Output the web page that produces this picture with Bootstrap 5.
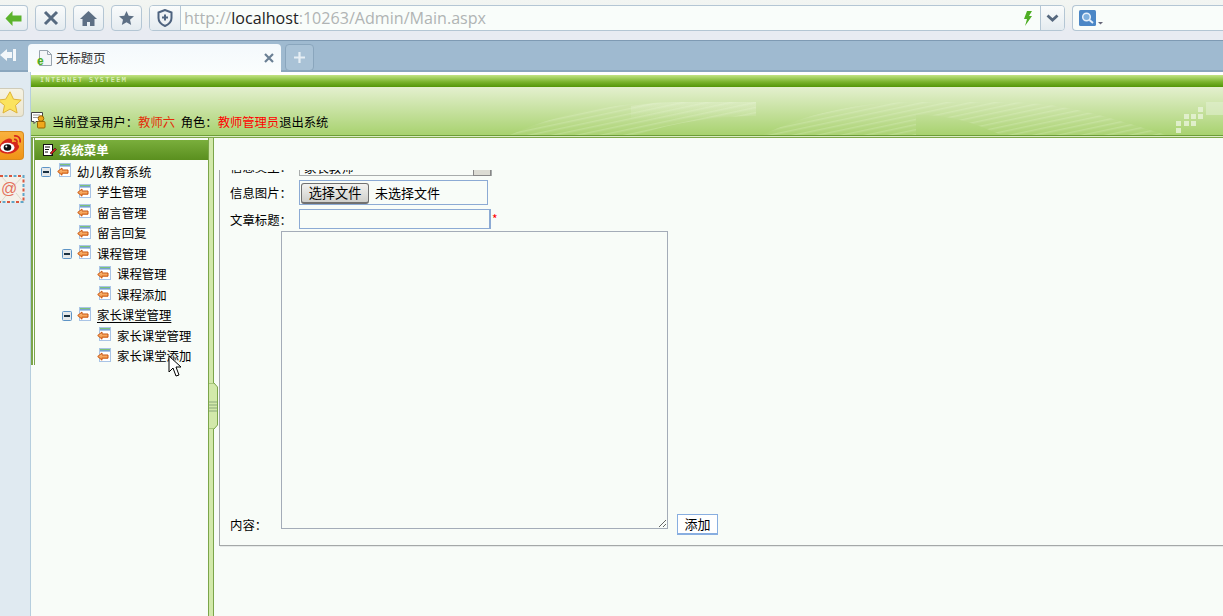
<!DOCTYPE html>
<html lang="zh">
<head>
<meta charset="utf-8">
<title>无标题页</title>
<link href="https://cdn.jsdelivr.net/npm/bootstrap@5.3.0/dist/css/bootstrap.min.css" rel="stylesheet">
<style>
html,body{height:616px;overflow:hidden}
body{font-family:"Liberation Sans","Noto Sans CJK SC",sans-serif;font-size:12.4px;line-height:1.2;color:#000;background:#f8fcf8}
.cjk{font-family:"Noto Sans CJK SC",sans-serif}
.chrome-bar{height:41px;background:linear-gradient(#f2f5f2 0,#f0f3f0 14px,#e8ebf2 31px);padding:5px 0 10px;border-bottom:1px solid #7e9ab3}
.tool-btn{width:31px;height:26px;border:1px solid #b4c6d4;border-radius:4px;background:linear-gradient(#fafcfc,#e4ebf0);flex:none;margin-left:7px}
.tool-back{width:29px;margin-left:-1px;border-left:0;border-radius:0 4px 4px 0}
.addr{width:916px;height:26px;margin-left:7px;border:1px solid #b4c6d4;border-radius:4px;background:#f9fdfa;flex:none;overflow:hidden}
.addr-shield{width:31px;background:linear-gradient(#fafcfc,#e4ebf0);border-right:1px solid #b4c6d4}
.addr-url{font-family:"Open Sans",sans-serif;font-size:16.1px;color:#b0b4b4;padding-left:3px;line-height:24px;white-space:nowrap}
.addr-url b{font-weight:400;color:#222}
.addr-drop{width:24px;background:linear-gradient(#fafcfc,#e4ebf0);border-left:1px solid #b4c6d4}
.search-box{height:26px;margin-left:7px;border:1px solid #b4c6d4;border-right:0;border-radius:4px 0 0 4px;background:#f9fdfa;padding-left:6px}
.tab-strip{height:31px;background:#9fbad0;border-bottom:2px solid #8aa6bd;padding-top:3px}
.tab-active{width:253px;height:28px;margin-left:5px;background:linear-gradient(#f4f9fc,#fafdfd);border-radius:4px 4px 0 0;padding:0 7px 0 8px;font-size:12.4px;color:#333}
.tab-fav{flex:none;margin-right:4px}
.tab-new{width:29px;height:27px;margin-left:4px;background:#a9c2d6;border:1px solid #8aa6bd;border-radius:4px}
.back-tab{width:23px;flex:none}
.stage{height:544px}
.rail{width:31px;flex:none;background:#e0eaf1;border-right:1px solid #b6cede;padding-top:16px}
.rail-btn{width:25px;height:29px;margin-left:-1px;border-radius:0 4px 4px 0;margin-bottom:14px}
.rail-star{background:linear-gradient(#f6f3e4,#ece6cf);border:1px solid #cfcbb8;border-left:0}
.rail-weibo{background:linear-gradient(#f9b13e,#f09417);border:1px solid #d98a1c;border-left:0}
.rail-mail{height:30px;display:block}
.gap-white{height:3px;background:#fff}
.app{min-width:0}
.band{height:12px;background:linear-gradient(#c4e384 0,#a2cf5e 3px,#79b32c 7px,#549608 100%);padding-left:9px}
.band-text{font-family:"DejaVu Sans Mono",monospace;font-size:6.8px;letter-spacing:1.35px;color:#e4f4ce;line-height:11px;display:block;white-space:nowrap}
.head{height:48px;background:linear-gradient(#e4f0cf,#a8d26f);position:relative;border-bottom:1px solid #6d9c38;box-sizing:content-box}
.head-deco{position:absolute;right:0;top:0;width:100%;height:48px}
.head-user{position:absolute;left:0;bottom:3px;display:flex;align-items:center;white-space:nowrap;font-size:12.3px}
.user-ico{margin-right:3px;margin-bottom:3px}
.role-label{margin-left:3px}
.head-rule{height:2px;background:#dcecc4;border-bottom:1px solid #7ea84a}
.red{color:#f00}
.orange-red{color:#e32c08}
.side{width:177px;flex:none;position:relative;height:100%}
.side-bar{position:absolute;left:0;top:0;width:4px;height:227px;border-left:2px solid #7ba54a;border-right:1px solid #7ba54a}
.side-head{height:20px;margin:2px 0 0 4px;width:173px;background:linear-gradient(#7aae3c,#5a8f1e);color:#fff;font-weight:700;padding-left:8px;line-height:19px}
.side-ico{margin-right:2px;flex:none}
.tree{margin:2px 0 0 4px;padding:0;list-style:none}
.node{height:20.5px;white-space:nowrap}
.lv0{padding-left:6px}
.lv0b{padding-left:27px}
.lv1{padding-left:42px}
.lv2{padding-left:62px}
.tog{width:10px;height:10px;flex:none;margin-right:6px}
.lv0b .tog{margin-right:5px}
.node-ico{width:14px;height:14px;flex:none;margin-right:6px;margin-bottom:4px}
.under{text-decoration:underline;text-underline-offset:2px}
.split{width:6px;flex:none;background:#d2e9aa;border-left:1px solid #7ba54a;border-right:1px solid #7ba54a;position:relative}
.split-grip{position:absolute;left:-1px;top:245px;width:10px;height:46px}
.main{min-width:0;padding:32px 0 0 5px}
.panel{height:376px;border-left:1px solid #a4a8a8;border-bottom:1px solid #a4a8a8;box-shadow:1px 1px 0 #e6eae8;padding-left:10px;width:1100px}
.clip-row{height:6px;overflow:hidden}
.clip-inner{margin-top:-10px;height:16px}
.lab{width:69px;flex:none;padding-top:6px}
.clip-inner .lab{padding-top:0}
.sel-box{width:193px;height:16px;border:1px solid #a8acac;padding-left:4px;background:#f8fcf8;position:relative}
.sel-arrow{position:absolute;right:0;top:0;width:18px;height:15px;background:#dcdcd4;border:1px solid #888}
.file-box{width:189px;height:25px;border:1px solid #8caad4;padding:1px 0 0 1px;margin-top:4px}
.file-btn{width:68px;height:21px;padding:0;font-size:13.2px;line-height:18px;background:linear-gradient(#f2f2f0,#cfcfcb);border:1px solid #707070;border-bottom-width:2px;border-radius:3px;color:#000;margin-right:6px;font-family:"Noto Sans CJK SC",sans-serif}
.file-txt{font-size:13px}
.title-in{width:192px;height:20px;border:1px solid #8caad4;border-right-width:2px;background:#f8fcf8;padding:0;margin-top:4px;outline:none}
.req{color:#f00;margin-left:1px;font-size:12px;margin-top:4px}
.ta-row{margin-top:2px}
.lab-short{width:51px;flex:none;margin-bottom:-4px}
.ta{width:387px;height:298px;border:1px solid #a4acb8;background:#f8fcf8;outline:none;display:block}
.add-btn{width:41px;height:21px;margin:0 0 -6px 9px;padding:0;font-size:13px;line-height:18px;background:#fff;border:1px solid #88aee0;border-width:1px 1px 2px 1px;color:#000;border-radius:0;font-family:"Noto Sans CJK SC",sans-serif}
.cursor{position:absolute;left:168px;top:355px;width:15px;height:23px;z-index:5}
</style>
</head>
<body class="m-0">
<svg width="0" height="0" class="position-absolute">
<defs>
<linearGradient id="ar" x1="0" y1="0" x2="0" y2="1"><stop offset="0" stop-color="#fbc48a"/><stop offset="1" stop-color="#f08a34"/></linearGradient>
<symbol id="tn" viewBox="0 0 14 14">
<rect x="2.500" y=".5" width="11" height="13" fill="#fff" stroke="#a9c4e6"/>
<rect x="3" y="1" width="10" height="1.200" fill="#7cc27a"/><rect x="3" y="2.200" width="10" height="1.300" fill="#5d8fc9"/>
<path d="M.7 8.500 5 5v2h6v3.200H5v2z" fill="url(#ar)" stroke="#c9540c"/>
</symbol>
<symbol id="tg" viewBox="0 0 10 10">
<rect x=".5" y=".5" width="9" height="9" rx="1" fill="#e4e8ea" stroke="#5e94c6"/>
<rect x="2" y="4" width="6" height="2" fill="#1a3040"/>
</symbol>
<pattern id="st" width="5" height="5" patternUnits="userSpaceOnUse" patternTransform="rotate(-12)"><rect width="5" height="5" fill="#e8f4d8" fill-opacity=".05"/><rect width="5" height="1.500" fill="#eef8e2" fill-opacity=".2"/></pattern>
<linearGradient id="wf" x1="0" y1="0" x2="0" y2="1"><stop offset="0" stop-color="#f0f8e4" stop-opacity=".28"/><stop offset="1" stop-color="#f0f8e4" stop-opacity="0"/></linearGradient>
</defs>
</svg>

<div class="chrome-bar d-flex align-items-start">
  <div class="tool-btn tool-back d-flex align-items-center justify-content-center"><svg width="17" height="15" viewBox="0 0 17 15"><path d="M7.500 0 .5 7.500 7.500 15V10.500H16.500V4.500H7.500z" fill="#5bb32c"/></svg></div>
  <div class="tool-btn d-flex align-items-center justify-content-center"><svg width="16" height="16" viewBox="0 0 16 16"><path d="M2 2l12 12M14 2 2 14" stroke="#566a80" stroke-width="3"/></svg></div>
  <div class="tool-btn d-flex align-items-center justify-content-center"><svg width="17" height="15" viewBox="0 0 17 15"><path d="M8.500 0 0 8h2.500v7H7v-4h3v4h4.500V8H17z" fill="#5d6f84"/></svg></div>
  <div class="tool-btn d-flex align-items-center justify-content-center"><svg width="15" height="14" viewBox="0 0 15 14"><path d="m7.500 0 2.200 4.800 5.300.5-4 3.500 1.200 5.200-4.700-2.700L2.800 14 4 8.800 0 5.300l5.300-.5z" fill="#5d6f84"/></svg></div>
  <div class="addr d-flex align-items-stretch">
    <div class="addr-shield d-flex align-items-center justify-content-center"><svg width="16" height="18" viewBox="0 0 16 18"><path d="M8 1 1.500 3.500V9c0 4 3 6.500 6.500 8 3.500-1.500 6.500-4 6.500-8V3.500z" fill="#eef2f5" stroke="#4f6480" stroke-width="2"/><path d="M8 5.500v6M5 8.500h6" stroke="#4f6480" stroke-width="2"/></svg></div>
    <div class="addr-url flex-grow-1">http://<b>localhost</b>:10263/Admin/Main.aspx</div>
    <div class="d-flex align-items-center pe-2"><svg width="9" height="15" viewBox="0 0 9 15"><path d="M4 0h5L6 5h3L2 15l2-7H1z" fill="#4fae25"/></svg></div>
    <div class="addr-drop d-flex align-items-center justify-content-center"><svg width="13" height="8" viewBox="0 0 13 8"><path d="M1.500 1.500 6.500 6l5-4.500" fill="none" stroke="#56687e" stroke-width="2.800"/></svg></div>
  </div>
  <div class="search-box flex-grow-1 d-flex align-items-center"><svg width="25" height="17" viewBox="0 0 25 17"><rect width="17" height="16" rx="1.500" fill="#4c87c6"/><circle cx="7.500" cy="7" r="3.800" fill="#7fb0de" stroke="#e6f0fa" stroke-width="1.500"/><path d="m10.500 10 3.500 3" stroke="#e6f0fa" stroke-width="2"/><path d="M19 12h5l-2.500 2.500z" fill="#667"/></svg></div>
</div>

<div class="tab-strip d-flex align-items-start">
  <div class="back-tab d-flex align-items-center ps-0 pt-1"><svg width="18" height="14" viewBox="0 0 18 14"><path d="M0 7 7 1v3h5v6H7v3z" fill="#f3f7fa"/><rect x="13" y="1" width="3" height="12" fill="#f3f7fa"/></svg></div>
  <div class="tab-active d-flex align-items-center">
    <svg class="tab-fav" width="16" height="20" viewBox="0 0 16 20"><path d="M3.500 2.500h8l4 4v11h-12z" fill="#f4f6f8" stroke="#98a4ae"/><path d="M11.500 2.500v4h4" fill="none" stroke="#98a4ae"/><text x="1" y="17" font-size="12" font-weight="700" fill="#4caf1e" font-family="Liberation Sans">e</text></svg>
    <span class="flex-grow-1 cjk">无标题页</span>
    <svg width="10" height="10" viewBox="0 0 10 10"><path d="M1 1l8 8M9 1 1 9" stroke="#6a7f94" stroke-width="2.200"/></svg>
  </div>
  <div class="tab-new d-flex align-items-center justify-content-center"><svg width="11" height="11" viewBox="0 0 11 11"><path d="M5.500 0v11M0 5.500h11" stroke="#e6eef4" stroke-width="2.200"/></svg></div>
</div>

<div class="stage d-flex">
  <aside class="rail">
    <div class="rail-btn rail-star d-flex align-items-center justify-content-start"><svg width="24" height="23" viewBox="0 0 24 23"><path d="m11 .8 3.500 7.400 7.700.9-5.700 5.300 1.600 7.600-7.100-3.900-7 3.900 1.500-7.600L-1 9.100l7.700-.9z" fill="#fbe35e" stroke="#e0b438"/></svg></div>
    <div class="rail-btn rail-weibo d-flex align-items-center justify-content-start"><svg width="24" height="23" viewBox="0 0 24 23"><path d="M0 14c0-4 6-9 10-9.500 3-.3 3.500 1.800 2.800 3.700 3.500-1.200 6.700-.5 6 2.500 2 1 1.500 3-.3 5-2.500 2.700-6 4-9.500 4C4 19.700 0 18 0 14z" fill="#d6261c"/><ellipse cx="8.500" cy="13.500" rx="7" ry="4.700" fill="#fff"/><ellipse cx="8.500" cy="13.500" rx="3.800" ry="3.200" fill="#111"/><circle cx="7.300" cy="12.500" r="1" fill="#fff"/><path d="M15 2c4-.8 7 2 6 6.500M15 5.500c2-.4 3.300.8 3 3" fill="none" stroke="#d6261c" stroke-width="1.700"/></svg></div>
    <svg class="rail-mail" width="25" height="30" viewBox="0 0 25 30"><rect x="0" y="1" width="24" height="28" fill="#f4f1ea"/><path d="M0 1 12 14 24 1M0 29l8-10M24 29l-8-10" fill="none" stroke="#dcd8cc"/><path d="M0 2h23.500v26H0" fill="none" stroke="#d9573e" stroke-width="2" stroke-dasharray="3 6"/><path d="M0 2h23.500v26H0" fill="none" stroke="#5fa6c9" stroke-width="2" stroke-dasharray="3 6" stroke-dashoffset="4.500"/><text x="1" y="20" font-size="16" font-family="Liberation Sans" fill="#e4705c">@</text></svg>
  </aside>
  <div class="app flex-grow-1 d-flex flex-column">
    <div class="gap-white"></div>
    <div class="band"><span class="band-text">INTERNET SYSTEEM</span></div>
    <div class="head">
      <svg class="head-deco" viewBox="0 0 1192 48" preserveAspectRatio="none">
        <path d="M479 48C525 27 580 15 650 15h75v14c-40 0-80 6-120 19z" fill="url(#st)"/>
        <path d="M600 19c20-3 35-4 50-4h75v14c-40 0-80 4-125 4z" fill="url(#wf)"/>
        <path d="M732 48c40-20 90-33 153-33v33z" fill="url(#st)"/>
        <path d="M885 15h90c55 0 100 14 160 33H970c-30-14-55-21-85-20z" fill="url(#st)"/>
        <rect x="1175" y="15" width="17" height="13" fill="#e4f0d4" fill-opacity=".55"/>
        <g fill="#e6f2d6" fill-opacity=".85"><rect x="1167" y="20" width="5" height="5"/><rect x="1153" y="27" width="5" height="5"/><rect x="1160" y="27" width="5" height="5"/><rect x="1167" y="27" width="5" height="5"/><rect x="1145" y="34" width="5" height="5"/><rect x="1153" y="34" width="5" height="5"/><rect x="1160" y="34" width="5" height="5"/><rect x="1145" y="41" width="5" height="5"/></g>
      </svg>
      <div class="head-user cjk">
        <svg class="user-ico" width="18" height="17" viewBox="0 0 18 17"><path d="M.5.5h11v9H5l-2 2v-2H.5z" fill="#fff" stroke="#444"/><path d="M2 3h7M2 5.500h5" stroke="#999"/><circle cx="10" cy="6.500" r="2.800" fill="#f0a81c" stroke="#9a6400"/><rect x="6.500" y="9.500" width="7.500" height="6.500" rx="1" fill="#f0a81c" stroke="#9a6400"/></svg>
        <span>当前登录用户：</span><span class="orange-red">教师六</span><span class="role-label">&nbsp;角色：</span><span class="red">教师管理员</span><span>退出系统</span>
      </div>
    </div>
    <div class="head-rule"></div>
    <div class="flex-grow-1 d-flex cjk">
      <nav class="side">
        <div class="side-bar"></div>
        <div class="side-head d-flex align-items-center"><svg class="side-ico" width="14" height="12" viewBox="0 0 14 12"><rect x=".5" y=".5" width="9" height="11" fill="#fff" stroke="#111"/><path d="M2 3h5M2 5.500h4M2 8h3" stroke="#111"/><path d="m7 9 5-5 1.500 1.500-5 5z" fill="#c8201c" stroke="#111" stroke-width=".5"/></svg>系统菜单</div>
        <ul class="tree">
          <li class="node lv0 d-flex align-items-center"><svg class="tog"><use href="#tg"/></svg><svg class="node-ico"><use href="#tn"/></svg><span>幼儿教育系统</span></li>
          <li class="node lv1 d-flex align-items-center"><svg class="node-ico"><use href="#tn"/></svg><span>学生管理</span></li>
          <li class="node lv1 d-flex align-items-center"><svg class="node-ico"><use href="#tn"/></svg><span>留言管理</span></li>
          <li class="node lv1 d-flex align-items-center"><svg class="node-ico"><use href="#tn"/></svg><span>留言回复</span></li>
          <li class="node lv0b d-flex align-items-center"><svg class="tog"><use href="#tg"/></svg><svg class="node-ico"><use href="#tn"/></svg><span>课程管理</span></li>
          <li class="node lv2 d-flex align-items-center"><svg class="node-ico"><use href="#tn"/></svg><span>课程管理</span></li>
          <li class="node lv2 d-flex align-items-center"><svg class="node-ico"><use href="#tn"/></svg><span>课程添加</span></li>
          <li class="node lv0b d-flex align-items-center"><svg class="tog"><use href="#tg"/></svg><svg class="node-ico"><use href="#tn"/></svg><span class="under">家长课堂管理</span></li>
          <li class="node lv2 d-flex align-items-center"><svg class="node-ico"><use href="#tn"/></svg><span>家长课堂管理</span></li>
          <li class="node lv2 d-flex align-items-center"><svg class="node-ico"><use href="#tn"/></svg><span>家长课堂添加</span></li>
        </ul>
      </nav>
      <div class="split"><svg class="split-grip" viewBox="0 0 10 46"><path d="M.5 0H6L9.500 4V42L6 46H.5z" fill="#d2e9aa" stroke="#7ba54a"/><path d="M1 19h8M1 22h8M1 25h8M1 28h8" stroke="#8ba87a"/></svg></div>
      <main class="main flex-grow-1 overflow-hidden">
        <div class="panel">
          <div class="clip-row"><div class="clip-inner d-flex align-items-start"><span class="lab">信息类型：</span><div class="sel-box">家长教师<div class="sel-arrow"></div></div></div></div>
          <div class="d-flex align-items-center"><span class="lab">信息图片：</span><div class="file-box d-flex align-items-center"><button type="button" class="file-btn">选择文件</button><span class="file-txt">未选择文件</span></div></div>
          <div class="d-flex align-items-center"><span class="lab">文章标题：</span><input class="title-in" type="text" aria-label="文章标题"><span class="req">*</span></div>
          <div class="ta-row d-flex align-items-end"><span class="lab-short">内容：</span><textarea class="ta" aria-label="内容"></textarea><button type="button" class="add-btn">添加</button></div>
        </div>
      </main>
    </div>
  </div>
</div>
<svg class="cursor" viewBox="0 0 15 23"><path d="M1 1v16l4-4 3 8 3-1-3-8h5z" fill="#fff" stroke="#000"/></svg>
<script src="https://cdn.jsdelivr.net/npm/bootstrap@5.3.0/dist/js/bootstrap.bundle.min.js"></script>
</body>
</html>
